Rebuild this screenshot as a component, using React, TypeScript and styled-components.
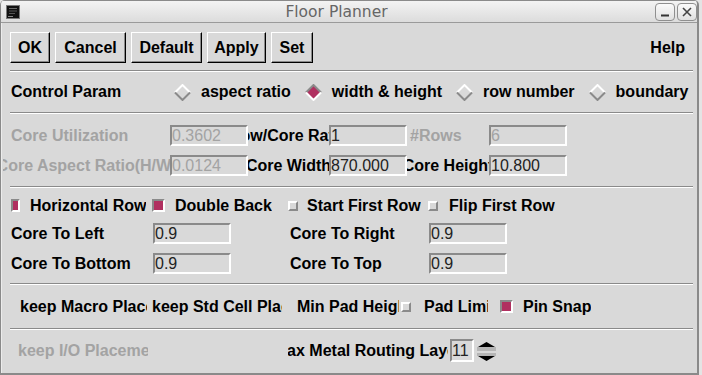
import React from "react";
import styled, { createGlobalStyle } from "styled-components";

const BG = "#d9d9d9";
const DIM = "#a3a3a3";
const SEL = "#b03060";
const SHADE = "#8a8a8a";

const GlobalStyle = createGlobalStyle`
  html, body { margin: 0; padding: 0; background: #e4e4e4; }
  body { font-family: "Liberation Sans", Arial, sans-serif; }
`;

const Window = styled.div`
  width: 699px;
  height: 375px;
  box-sizing: border-box;
  background: ${BG};
  border-left: 1px solid ${SHADE};
  border-right: 2px solid ${SHADE};
  border-bottom: 2px solid ${SHADE};
  border-radius: 5px 5px 0 0;
  display: flex;
  flex-direction: column;
  overflow: hidden;
`;

const TitleBar = styled.div`
  flex: none;
  height: 23px;
  box-sizing: border-box;
  border-top: 1px solid ${SHADE};
  border-bottom: 1px solid #9a9a9a;
  background: linear-gradient(#f3f3f3, #dcdcdc);
  display: flex;
  align-items: center;
  padding-left: 5px;
`;

const Title = styled.div`
  flex: 1;
  text-align: center;
  font-family: "DejaVu Sans", "Liberation Sans", sans-serif;
  font-size: 15.5px;
  color: #666;
`;

const WinButton = styled.div`
  width: 20px;
  height: 18px;
  box-sizing: border-box;
  margin-left: 2px;
  border: 1px solid #8f8f8f;
  border-radius: 4px;
  background: linear-gradient(#fafafa, #e0e0e0);
  display: flex;
  align-items: center;
  justify-content: center;
`;

const Content = styled.div`
  flex: 1;
  display: flex;
  flex-direction: column;
  box-shadow: inset 1px 0 0 #ececec;
`;

const Separator = styled.div`
  flex: none;
  height: 2px;
  box-sizing: border-box;
  margin: 0 4px 0 9px;
  border-top: 1px solid ${SHADE};
  border-bottom: 1px solid #fff;
`;

const ButtonBar = styled.div`
  flex: none;
  display: flex;
  align-items: center;
  gap: 5px;
  padding: 9px 12px 7px 9px;
`;

const Button = styled.div<{ $w: number }>`
  width: ${(p) => p.$w}px;
  height: 31px;
  box-sizing: border-box;
  border: 1px solid;
  border-color: #fff #000 #000 #fff;
  box-shadow: inset -1px -1px 0 ${SHADE};
  display: flex;
  align-items: center;
  justify-content: center;
  font-weight: bold;
  font-size: 16px;
  color: #000;
`;

const Help = styled.div`
  margin-left: auto;
  font-weight: bold;
  font-size: 16px;
`;

const ControlRow = styled.div`
  flex: none;
  height: 40px;
  display: flex;
  align-items: center;
  padding-left: 10px;
`;

const RadioGroup = styled.div`
  display: flex;
  align-items: center;
  gap: 14px;
`;

const RadioItem = styled.div`
  display: flex;
  align-items: center;
  gap: 10px;
  font-weight: bold;
  font-size: 16px;
`;

const Label = styled.div<{ $w?: number; $dim?: boolean; $center?: boolean; $indent?: number; $ml?: number }>`
  ${(p) => (p.$w ? `width: ${p.$w}px;` : "")}
  flex: none;
  height: 100%;
  box-sizing: border-box;
  margin-left: ${(p) => p.$ml ?? 0}px;
  padding-left: ${(p) => p.$indent ?? 0}px;
  display: flex;
  align-items: center;
  justify-content: ${(p) => (p.$center ? "center" : "flex-start")};
  overflow: hidden;
  white-space: nowrap;
  font-weight: bold;
  font-size: 16px;
  color: ${(p) => (p.$dim ? DIM : "#000")};
`;

const Entry = styled.div<{ $dim?: boolean; $w?: number; $ml?: number }>`
  flex: none;
  width: ${(p) => p.$w ?? 78}px;
  height: 100%;
  box-sizing: border-box;
  margin-left: ${(p) => p.$ml ?? 0}px;
  border: 2px solid;
  border-color: ${SHADE} #fff #fff ${SHADE};
  display: flex;
  align-items: center;
  overflow: hidden;
  white-space: nowrap;
  font-size: 16px;
  color: ${(p) => (p.$dim ? DIM : "#222")};
`;

const RatioGrid = styled.div`
  flex: none;
  display: grid;
  grid-template-columns: 167px 78px 81px 78px 82px 79px;
  grid-auto-rows: 21px;
  row-gap: 9px;
  padding: 11px 0 10px 2px;
`;

const MarginSection = styled.div`
  flex: none;
  display: flex;
  flex-direction: column;
  padding: 7px 0 9px 0;
`;

const CheckRow = styled.div`
  height: 21px;
  display: flex;
  align-items: center;
  gap: 4px;
  padding-left: 10px;
  margin-bottom: 7px;
`;

const CheckItem = styled.div<{ $w?: number; $mr?: number }>`
  ${(p) => (p.$w ? `width: ${p.$w}px;` : "")}
  margin-right: ${(p) => p.$mr ?? 0}px;
  height: 100%;
  display: flex;
  align-items: center;
  overflow: hidden;
`;

const Indicator = styled.div<{ $on?: boolean; $w: number; $h: number; $ml?: number }>`
  flex: none;
  width: ${(p) => p.$w}px;
  height: ${(p) => p.$h}px;
  box-sizing: border-box;
  margin-left: ${(p) => p.$ml ?? 0}px;
  border: 2px solid;
  border-color: ${(p) => (p.$on ? `${SHADE} #fff #fff ${SHADE}` : `#fff ${SHADE} ${SHADE} #fff`)};
  background: ${(p) => (p.$on ? SEL : BG)};
`;

const MarginGrid = styled.div`
  display: grid;
  grid-template-columns: 142px 78px 198px 78px;
  grid-auto-rows: 21px;
  row-gap: 9px;
  padding-left: 10px;
`;

const OptionRow = styled.div<{ $pad: number; $top: number }>`
  flex: none;
  height: 43px;
  box-sizing: border-box;
  display: flex;
  align-items: stretch;
  padding: ${(p) => p.$top}px 0 11px ${(p) => p.$pad}px;
`;

const Diamond = ({ on }: { on?: boolean }) => (
  <svg width="17" height="17" viewBox="0 0 17 17">
    <polygon points="8.5,1 16,8.5 8.5,16 1,8.5" fill={on ? SEL : BG} />
    <polyline points="1,8.5 8.5,1 16,8.5" fill="none" stroke={on ? SHADE : "#fff"} strokeWidth="2" />
    <polyline points="1,8.5 8.5,16 16,8.5" fill="none" stroke={on ? "#fff" : SHADE} strokeWidth="2" />
  </svg>
);

const AppIcon = () => (
  <svg width="14" height="14" viewBox="0 0 14 14">
    <rect x="0.5" y="0.5" width="13" height="13" fill="#111" stroke="#7a7a7a" />
    <line x1="3" y1="3.5" x2="11" y2="3.5" stroke="#6a6a6a" />
    <line x1="3" y1="6" x2="11" y2="6" stroke="#555" />
    <line x1="3" y1="8.5" x2="9" y2="8.5" stroke="#555" />
    <line x1="2" y1="11.5" x2="7" y2="11.5" stroke="#888" />
  </svg>
);

const SpinArrows = () => (
  <svg width="19" height="23" viewBox="0 0 19 23" style={{ marginLeft: 3 }}>
    <rect x="0" y="8" width="19" height="4" fill="#b5b5b5" />
    <polygon points="9.5,3 18,8 1,8" fill="#000" />
    <rect x="0" y="14" width="19" height="3" fill="#b5b5b5" />
    <polygon points="1,17 18,17 9.5,22" fill="#000" />
  </svg>
);

const radios = [
  { label: "aspect ratio", on: false },
  { label: "width & height", on: true },
  { label: "row number", on: false },
  { label: "boundary", on: false },
];

const buttons: [string, number][] = [
  ["OK", 40],
  ["Cancel", 71],
  ["Default", 71],
  ["Apply", 59],
  ["Set", 42],
];

export default function App() {
  return (
    <>
      <GlobalStyle />
      <Window>
        <TitleBar>
          <AppIcon />
          <Title>Floor Planner</Title>
          <WinButton>
            <svg width="10" height="10" viewBox="0 0 10 10">
              <line x1="1" y1="8.5" x2="9" y2="8.5" stroke="#333" strokeWidth="2" />
            </svg>
          </WinButton>
          <WinButton>
            <svg width="10" height="10" viewBox="0 0 10 10">
              <path d="M1 1 L9 9 M9 1 L1 9" stroke="#444" strokeWidth="1.6" />
            </svg>
          </WinButton>
        </TitleBar>
        <Content>
          <ButtonBar>
            {buttons.map(([t, w]) => (
              <Button key={t} $w={w}>{t}</Button>
            ))}
            <Help>Help</Help>
          </ButtonBar>
          <Separator />
          <ControlRow>
            <Label $w={163}>Control Param</Label>
            <RadioGroup>
              {radios.map((r) => (
                <RadioItem key={r.label}>
                  <Diamond on={r.on} />
                  {r.label}
                </RadioItem>
              ))}
            </RadioGroup>
          </ControlRow>
          <Separator />
          <RatioGrid>
            <Label $dim $indent={8}>Core Utilization</Label>
            <Entry $dim>0.3602</Entry>
            <Label $center>Row/Core Ratio</Label>
            <Entry>1</Entry>
            <Label $dim $indent={3}>#Rows</Label>
            <Entry $dim>6</Entry>
            <Label $dim $center>Core Aspect Ratio(H/W)</Label>
            <Entry $dim>0.0124</Entry>
            <Label $center>Core Width</Label>
            <Entry>870.000</Entry>
            <Label $center>Core Height</Label>
            <Entry>10.800</Entry>
          </RatioGrid>
          <Separator />
          <MarginSection>
            <CheckRow>
              <CheckItem $w={135} $mr={2}>
                <Indicator $on $w={9} $h={13} />
                <Label $ml={10}>Horizontal Row</Label>
              </CheckItem>
              <CheckItem $w={132}>
                <Indicator $on $w={13} $h={13} />
                <Label $ml={10}>Double Back</Label>
              </CheckItem>
              <CheckItem $w={136}>
                <Indicator $w={10} $h={10} />
                <Label $ml={9}>Start First Row</Label>
              </CheckItem>
              <CheckItem>
                <Indicator $w={10} $h={10} />
                <Label $ml={11}>Flip First Row</Label>
              </CheckItem>
            </CheckRow>
            <MarginGrid>
              <Label>Core To Left</Label>
              <Entry>0.9</Entry>
              <Label $indent={59}>Core To Right</Label>
              <Entry>0.9</Entry>
              <Label>Core To Bottom</Label>
              <Entry>0.9</Entry>
              <Label $indent={59}>Core To Top</Label>
              <Entry>0.9</Entry>
            </MarginGrid>
          </MarginSection>
          <Separator />
          <OptionRow $pad={19} $top={11}>
            <Label $w={127}>keep Macro Placement</Label>
            <Label $w={130} $ml={5}>keep Std Cell Placement</Label>
            <Label $w={102} $ml={15}>Min Pad Height</Label>
            <Indicator $w={10} $h={10} $ml={2} style={{ alignSelf: "center" }} />
            <Label $w={64} $ml={13}>Pad Limit</Label>
            <Indicator $on $w={13} $h={13} $ml={12} style={{ alignSelf: "center" }} />
            <Label $ml={10}>Pin Snap</Label>
          </OptionRow>
          <Separator />
          <OptionRow $pad={17} $top={9}>
            <Label $w={130} $dim>keep I/O Placement</Label>
            <Label $w={160} $ml={140} $center>Max Metal Routing Layer</Label>
            <Entry $w={24} $ml={2}>11</Entry>
            <SpinArrows />
          </OptionRow>
        </Content>
      </Window>
    </>
  );
}
